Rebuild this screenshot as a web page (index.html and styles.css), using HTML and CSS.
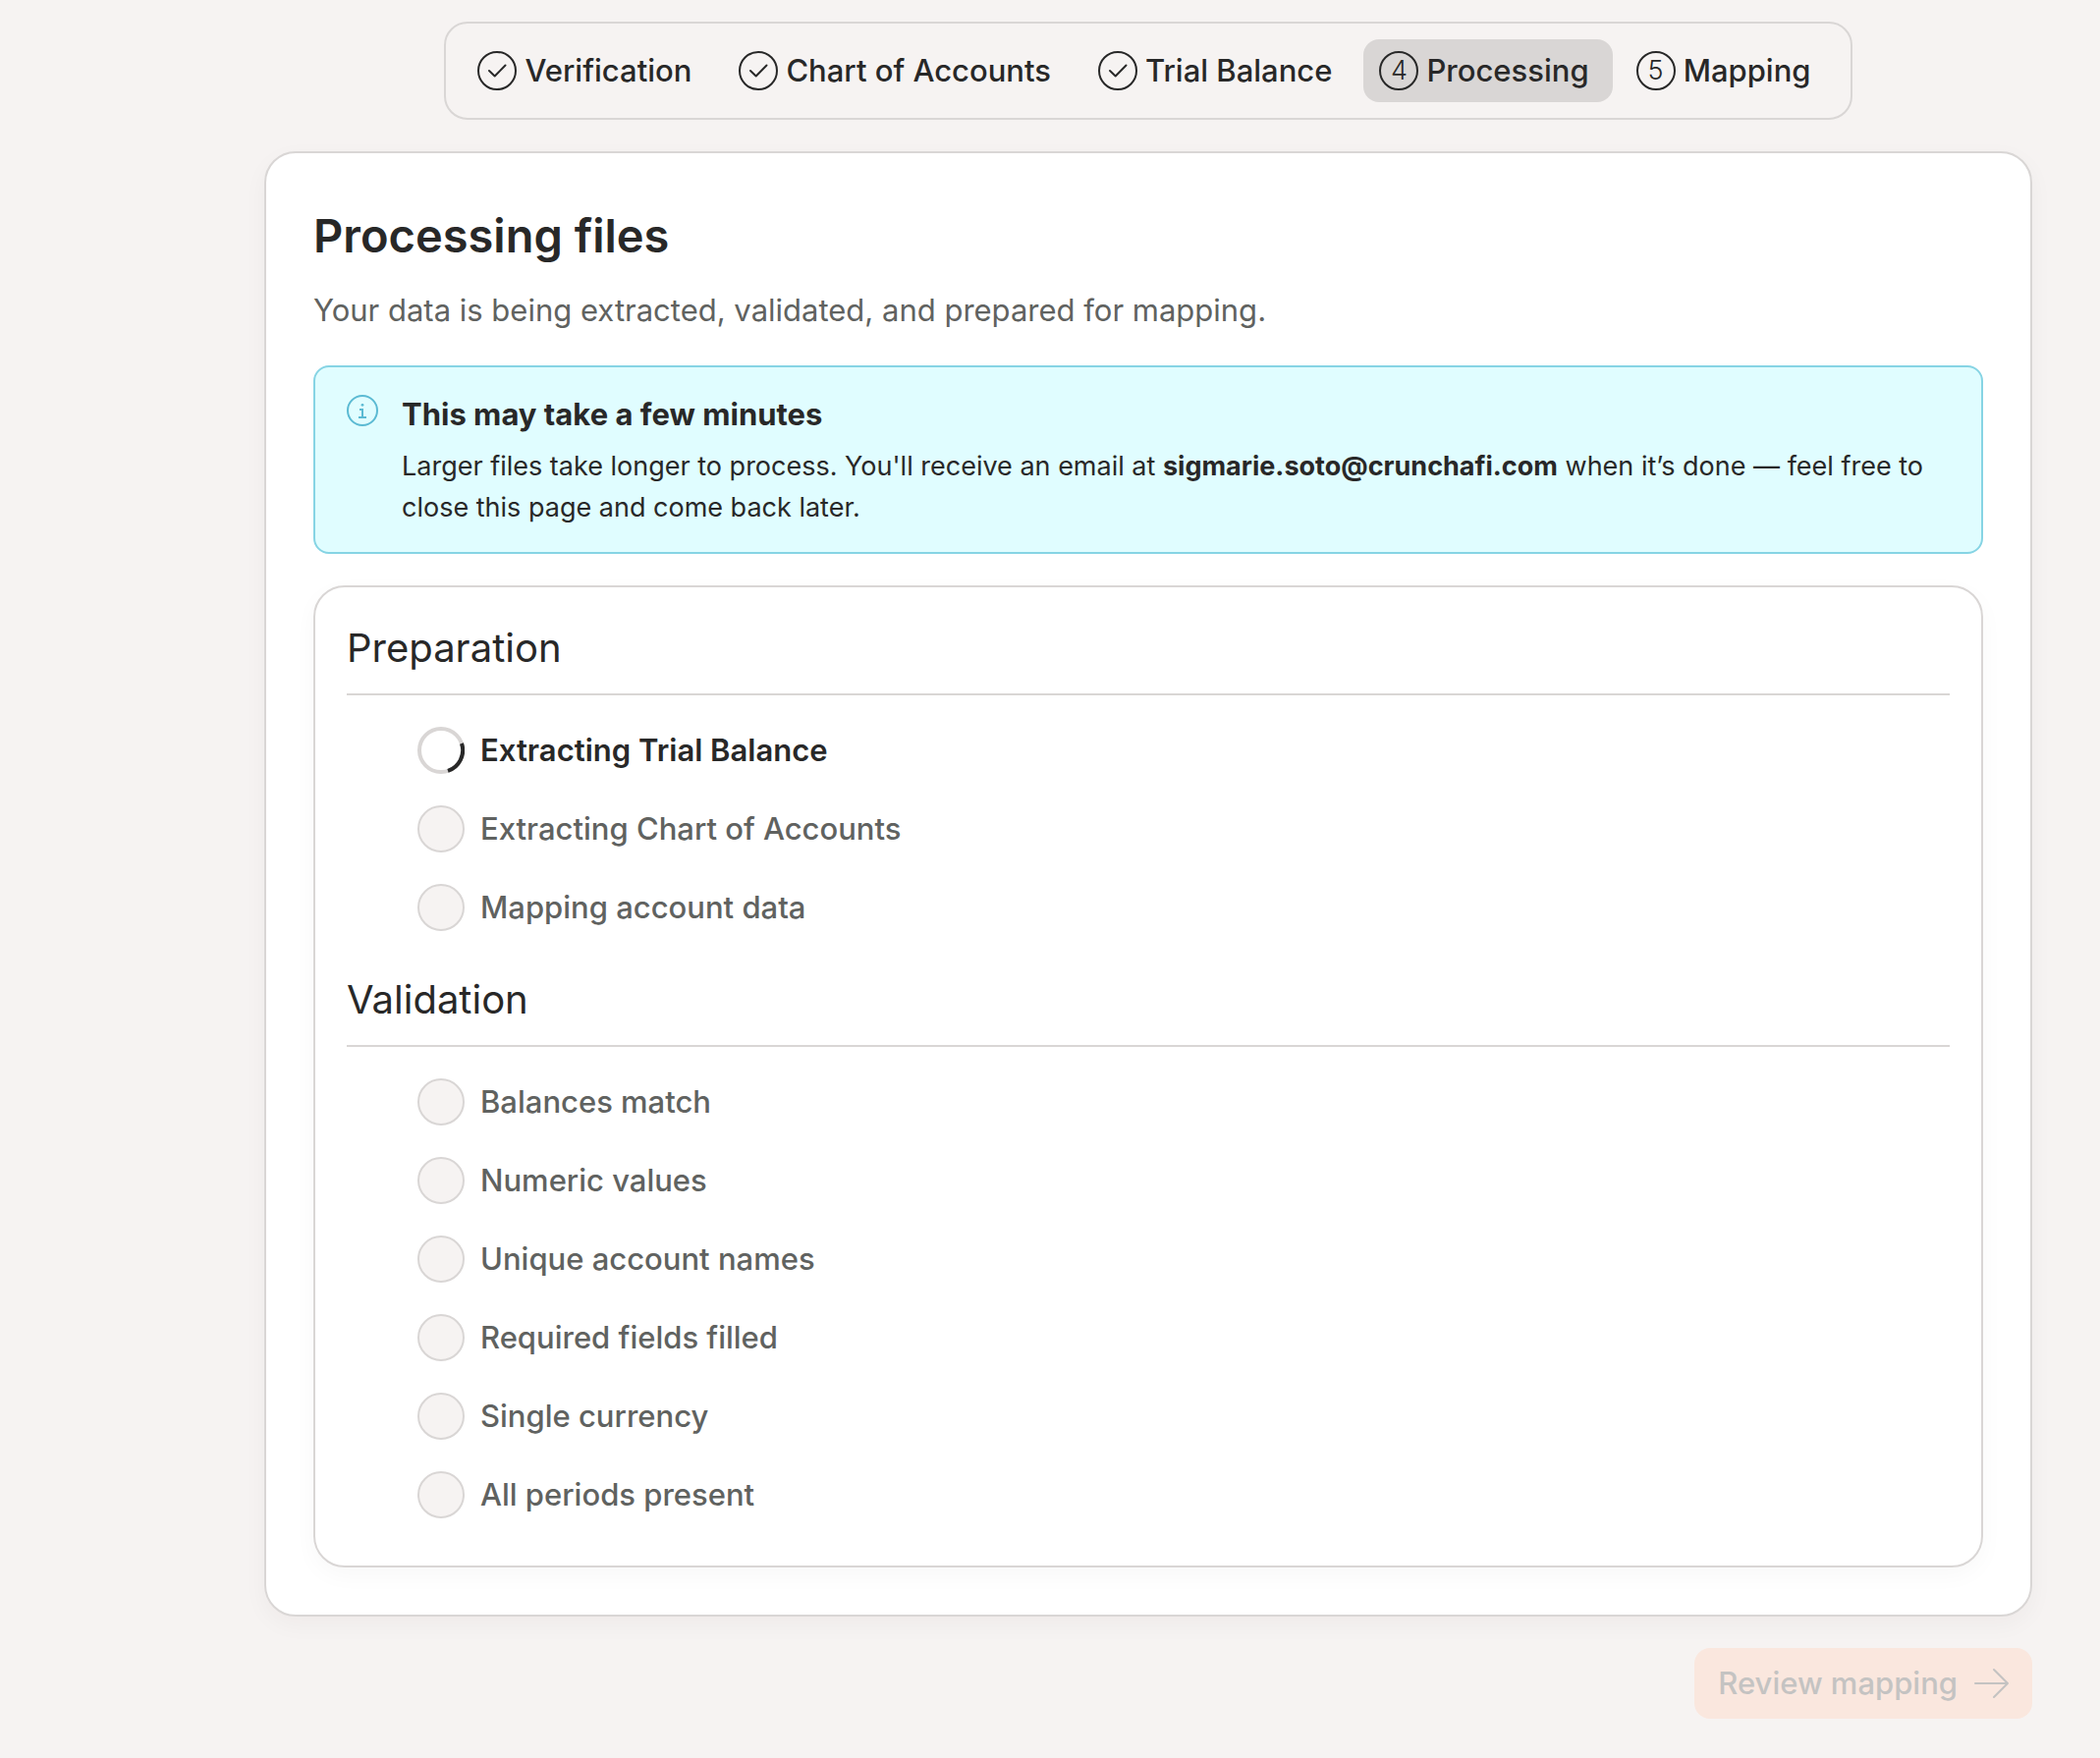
FILE: index.html
```html
<!DOCTYPE html>
<html lang="en">
<head>
<meta charset="utf-8">
<meta name="viewport" content="width=device-width, initial-scale=1">
<title>Processing files</title>
<link rel="stylesheet" href="styles.css">
</head>
<body>
<div class="page">
  <nav class="stepper" aria-label="Progress">
    <ol class="steps">
      <li class="step">
        <svg class="step-icon" viewBox="0 0 40 40" aria-hidden="true"><circle cx="20" cy="20" r="19"/><path d="M12 20l5.700 5.500L28.500 14.500"/></svg>
        <span>Verification</span>
      </li>
      <li class="step">
        <svg class="step-icon" viewBox="0 0 40 40" aria-hidden="true"><circle cx="20" cy="20" r="19"/><path d="M12 20l5.700 5.500L28.500 14.500"/></svg>
        <span>Chart of Accounts</span>
      </li>
      <li class="step">
        <svg class="step-icon" viewBox="0 0 40 40" aria-hidden="true"><circle cx="20" cy="20" r="19"/><path d="M12 20l5.700 5.500L28.500 14.500"/></svg>
        <span>Trial Balance</span>
      </li>
      <li class="step step-current" aria-current="step">
        <span class="step-number">4</span>
        <span>Processing</span>
      </li>
      <li class="step">
        <span class="step-number">5</span>
        <span>Mapping</span>
      </li>
    </ol>
  </nav>

  <main class="card">
    <h1 class="title">Processing files</h1>
    <p class="subtitle">Your data is being extracted, validated, and prepared for mapping.</p>

    <section class="alert" role="status">
      <svg class="alert-icon" viewBox="0 0 32 32" aria-hidden="true"><circle cx="16" cy="16" r="15"/><path d="M13 15h3v8M12 23h8"/><circle class="dot" cx="16" cy="10.300" r="1.400"/></svg>
      <div class="alert-content">
        <h2 class="alert-title">This may take a few minutes</h2>
        <p class="alert-text">Larger files take longer to process. You'll receive an email at <strong>sigmarie.soto@crunchafi.com</strong> when it’s done — feel free to close this page and come back later.</p>
      </div>
    </section>

    <div class="panel">
      <section class="group">
        <h2 class="group-title">Preparation</h2>
        <ul class="tasks">
          <li class="task task-active">
            <svg class="spinner" viewBox="0 0 48 48" aria-hidden="true"><circle cx="24" cy="24" r="22"/><path d="M45 17A22 22 0 0 1 31 44.900"/></svg>
            <span>Extracting Trial Balance</span>
          </li>
          <li class="task"><span class="dot-pending"></span><span>Extracting Chart of Accounts</span></li>
          <li class="task"><span class="dot-pending"></span><span>Mapping account data</span></li>
        </ul>
      </section>
      <section class="group">
        <h2 class="group-title">Validation</h2>
        <ul class="tasks">
          <li class="task"><span class="dot-pending"></span><span>Balances match</span></li>
          <li class="task"><span class="dot-pending"></span><span>Numeric values</span></li>
          <li class="task"><span class="dot-pending"></span><span>Unique account names</span></li>
          <li class="task"><span class="dot-pending"></span><span>Required fields filled</span></li>
          <li class="task"><span class="dot-pending"></span><span>Single currency</span></li>
          <li class="task"><span class="dot-pending"></span><span>All periods present</span></li>
        </ul>
      </section>
    </div>
  </main>

  <div class="actions">
    <button class="review" type="button" disabled>
      <span>Review mapping</span>
      <svg class="arrow" viewBox="0 0 36 32" aria-hidden="true"><path d="M2 16h33M21 2l14 14L21 30"/></svg>
    </button>
  </div>
</div>
</body>
</html>
```
FILE: styles.css
```css
* {
  box-sizing: border-box;
}

body {
  margin: 0;
  background: #f6f3f2;
  color: #282828;
  font-family: Inter, "Liberation Sans", sans-serif;
  font-size: 31px;
  line-height: 48px;
}

h1, h2, p, ol, ul {
  margin: 0;
  padding: 0;
}

ol, ul {
  list-style: none;
}

.page {
  display: flex;
  flex-direction: column;
  gap: 32px;
  max-width: 2138px;
  padding: 22px 69px 40px 269px;
}

.stepper {
  align-self: center;
  padding: 16px;
  border: 2px solid #d9d6d5;
  border-radius: 24px;
}

.steps {
  display: flex;
  gap: 8px;
}

.step {
  display: flex;
  align-items: center;
  gap: 8px;
  height: 64px;
  padding: 0 24px 0 16px;
  border-radius: 16px;
  white-space: nowrap;
  font-weight: 500;
}

.step-current {
  background: #d9d6d5;
}

.step-icon {
  width: 40px;
  height: 40px;
  fill: none;
  stroke: #282828;
  stroke-width: 2;
  stroke-linecap: round;
  stroke-linejoin: round;
}

.step-number {
  display: flex;
  align-items: center;
  justify-content: center;
  width: 40px;
  height: 40px;
  border: 2px solid #282828;
  border-radius: 50%;
  font-size: 27px;
  font-weight: 300;
}

.card {
  padding: 48px;
  border: 2px solid #d9d6d5;
  border-radius: 32px;
  background: #fff;
  box-shadow: 0 8px 24px rgba(40, 20, 20, 0.04);
}

.title {
  font-size: 47px;
  line-height: 72px;
  font-weight: 600;
}

.subtitle {
  margin-top: 16px;
  color: #606260;
}

.alert {
  display: flex;
  gap: 24px;
  margin-top: 32px;
  padding: 24px 32px;
  border: 2px solid #86d4e4;
  border-radius: 16px;
  background: #e0fdff;
}

.alert-icon {
  flex: none;
  width: 32px;
  height: 32px;
  margin-top: 4px;
  fill: none;
  stroke: #5bbad3;
  stroke-width: 2;
}

.alert-icon .dot {
  fill: #5bbad3;
  stroke: none;
}

.alert-title {
  font-size: 31px;
  font-weight: 700;
}

.alert-text {
  margin-top: 8px;
  font-size: 27px;
  line-height: 42px;
}

.panel {
  display: flex;
  flex-direction: column;
  gap: 40px;
  margin-top: 32px;
  padding: 32px 32px 48px;
  border: 2px solid #d9d6d5;
  border-radius: 32px;
  box-shadow: 0 8px 24px rgba(40, 20, 20, 0.03);
}

.group-title {
  padding-bottom: 16px;
  border-bottom: 2px solid #d9d6d5;
  font-size: 40px;
  line-height: 60px;
  font-weight: 400;
}

.tasks {
  display: flex;
  flex-direction: column;
  gap: 32px;
  padding: 32px 72px 0;
}

.task {
  display: flex;
  align-items: center;
  gap: 16px;
  color: #606260;
  font-weight: 500;
}

.task-active {
  color: #282828;
  font-weight: 600;
}

.dot-pending {
  width: 48px;
  height: 48px;
  border: 2px solid #d9d6d5;
  border-radius: 50%;
  background: #f6f3f2;
}

.spinner {
  width: 48px;
  height: 48px;
  fill: none;
  stroke: #d9d6d5;
  stroke-width: 4;
}

.spinner path {
  stroke: #282828;
}

.actions {
  display: flex;
  justify-content: flex-end;
}

.review {
  display: flex;
  align-items: center;
  gap: 16px;
  height: 72px;
  padding: 0 24px;
  border: 0;
  border-radius: 16px;
  background: #fae7de;
  color: #c4c3c2;
  font: inherit;
  font-weight: 500;
}

.arrow {
  width: 36px;
  height: 32px;
  fill: none;
  stroke: currentColor;
  stroke-width: 2;
  stroke-linecap: round;
  stroke-linejoin: round;
}
```
